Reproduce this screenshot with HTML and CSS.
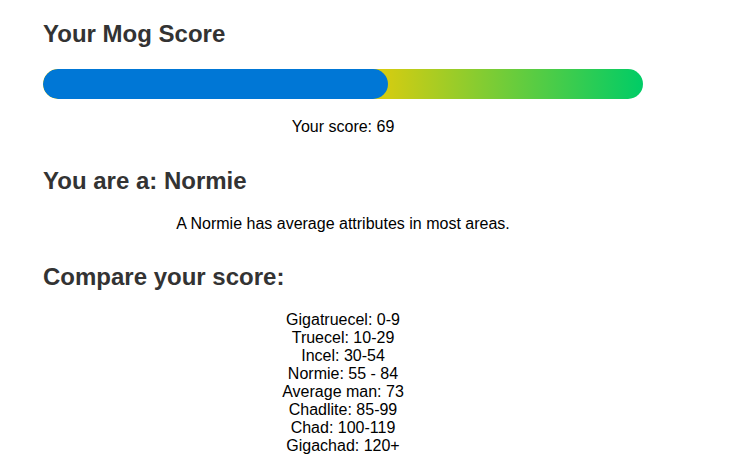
FILE: index.html
```html
<!DOCTYPE html>
<html lang="en">
<head>
<meta charset="utf-8">
<title>Your Mog Score</title>
<link rel="stylesheet" href="styles.css">
</head>
<body>
<main class="page">
  <h2 class="heading heading-first">Your Mog Score</h2>
  <div class="meter">
    <div class="meter-fill" style="width: 57.5%"></div>
  </div>
  <p class="score">Your score: 69</p>

  <h2 class="heading heading-result">You are a: Normie</h2>
  <p class="description">A Normie has average attributes in most areas.</p>

  <h2 class="heading heading-compare">Compare your score:</h2>
  <ul class="tiers">
    <li>Gigatruecel: 0-9</li>
    <li>Truecel: 10-29</li>
    <li>Incel: 30-54</li>
    <li>Normie: 55 - 84</li>
    <li>Average man: 73</li>
    <li>Chadlite: 85-99</li>
    <li>Chad: 100-119</li>
    <li>Gigachad: 120+</li>
  </ul>
</main>
</body>
</html>
```

FILE: styles.css
```css
html, body {
  background: #ffffff;
}

body {
  margin: 0;
  font-family: "Liberation Sans", Arial, sans-serif;
  font-size: 16px;
  color: #000000;
}

.page {
  width: 600px;
  padding: 20px 0 0 43px;
}

.heading {
  margin: 0;
  font-size: 24px;
  font-weight: bold;
  color: #333333;
  line-height: 28px;
}

.heading-result {
  margin-top: 31px;
}

.heading-compare {
  margin-top: 30px;
}

.meter {
  margin-top: 21px;
  height: 30px;
  border-radius: 15px;
  overflow: hidden;
  background: linear-gradient(to right, #e6cc0a 0%, #d8cc10 56%, #00cc66 100%);
}

.meter-fill {
  height: 100%;
  border-radius: 15px;
  background: #0077d6;
}

.score {
  margin: 19px 0 0;
  text-align: center;
  line-height: 18px;
}

.description {
  margin: 20px 0 0;
  text-align: center;
  line-height: 18px;
}

.tiers {
  list-style: none;
  margin: 20px 0 0;
  padding: 0;
  text-align: center;
  line-height: 18px;
}
```
